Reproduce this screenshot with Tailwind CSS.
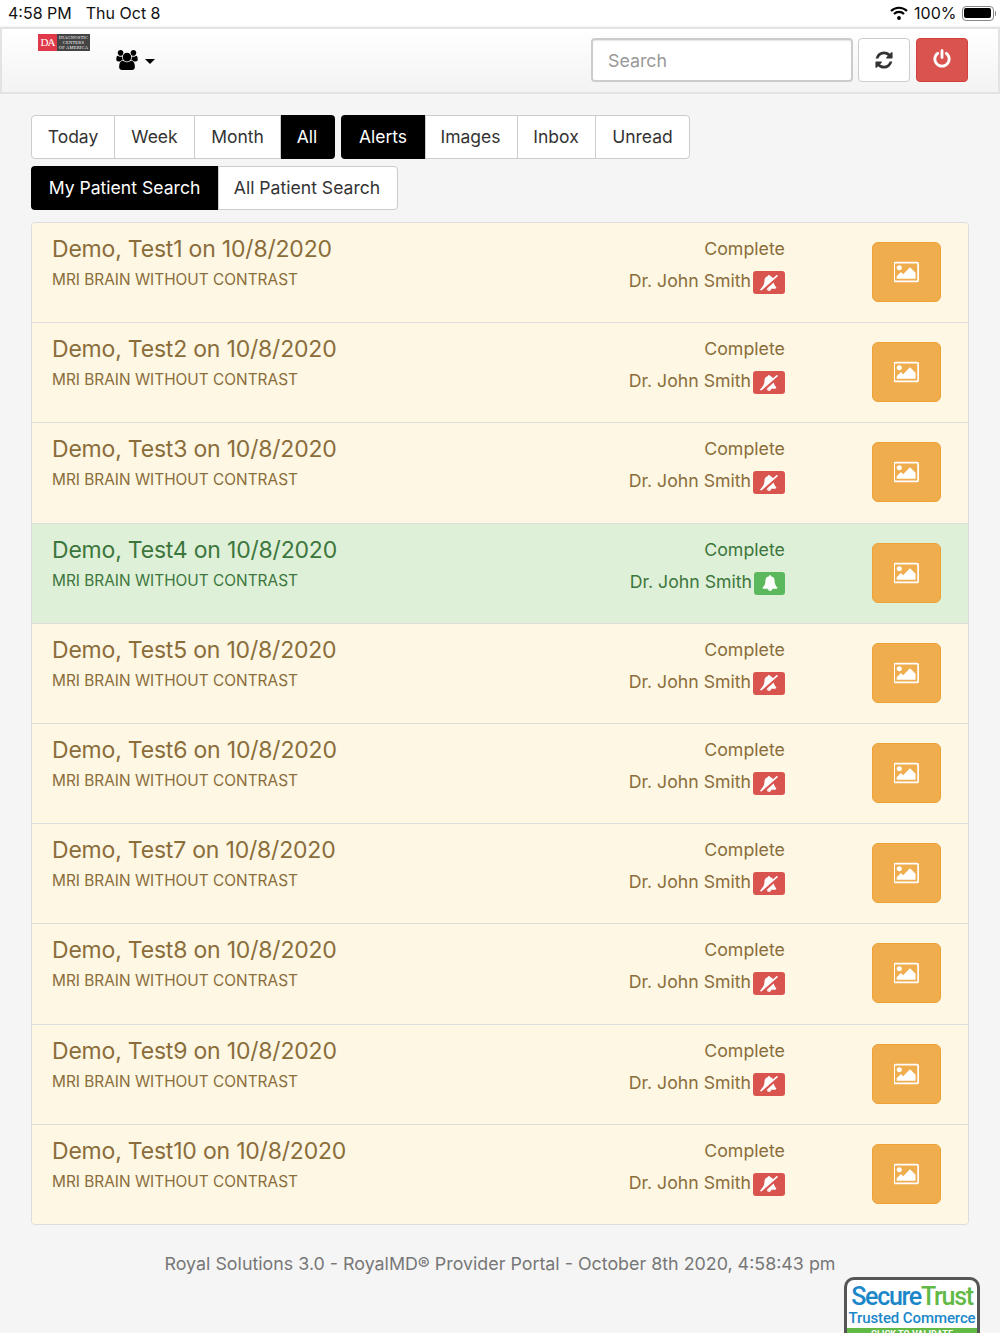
<!DOCTYPE html>
<html lang="en">
<head>
    <meta charset="UTF-8">
    <meta name="viewport" content="width=device-width, initial-scale=1.0">
    <title>RoyalMD Provider Portal</title>
    <script src="https://cdn.jsdelivr.net/npm/@tailwindcss/browser@4"></script>
</head>
<body class="h-[1333px] overflow-hidden bg-[#f5f5f5] font-['Inter',sans-serif] text-[#333]">
    <!-- Status bar -->
    <div class="flex h-[26px] items-center justify-between bg-white pl-2 pr-[4px] text-[16px] text-[#111]">
        <div class="flex gap-[14px]"><span>4:58 PM</span><span>Thu Oct 8</span></div>
        <div class="flex items-center gap-[5px]">
            <svg class="mr-px h-[14px] w-[18px]" viewBox="0 0 18 14" fill="none" stroke="#000" stroke-width="2.2"><path d="M1 5 A11.5 11.5 0 0 1 17 5"/><path d="M4 8 A7 7 0 0 1 14 8"/><circle cx="9" cy="12" r="1.9" fill="#000" stroke="none"/></svg>
            <span>100%</span>
            <div class="flex items-center gap-px">
                <div class="h-[15px] w-[32px] rounded-[4px] border border-[#888] p-[1.5px]"><div class="h-full w-full rounded-[2px] bg-black"></div></div>
                <div class="h-[5px] w-[1.5px] rounded-r-sm bg-[#888]"></div>
            </div>
        </div>
    </div>

    <!-- Navbar -->
    <div class="mt-px flex h-[67px] border-2 border-[#e3e3e3] bg-linear-to-b from-white to-[#f3f3f3]">
        <div class="ml-[36px] mt-[5px] flex h-[17px] w-[52px]">
            <div class="flex h-full w-[19px] items-center justify-center bg-[#e03a4a] font-['Liberation_Serif',serif] text-[11px] tracking-[-1px] text-white">DA</div>
            <div class="flex h-full w-[33px] flex-col items-center justify-center bg-[#444] font-['Liberation_Serif',serif] text-[4.5px] leading-[5px] tracking-[0.2px] text-white"><span>DIAGNOSTIC</span><span>CENTERS</span><span>OF AMERICA</span></div>
        </div>
        <div class="ml-[26px] mt-[20px] flex h-[22px] items-center gap-[7px]">
            <svg class="h-[20px] w-[22px]" viewBox="0 0 1920 1792" fill="#000"><path d="M593 896q-162 5-265 128h-134q-82 0-138-40.5t-56-118.5q0-353 124-353 6 0 43.5 21t97.5 42.5 119 21.5q67 0 133-23-5 37-5 66 0 139 81 256zm1071 637q0 120-73 189.5t-194 69.5h-874q-121 0-194-69.5t-73-189.5q0-53 3.5-103.5t14-109 26.5-108.5 43-97.5 62-81 85.5-53.5 111.5-20q10 0 43 21.5t73 48 107 48 135 21.5 135-21.5 107-48 73-48 43-21.5q61 0 111.5 20t85.5 53.5 62 81 43 97.5 26.5 108.5 14 109 3.5 103.5zm-1024-1277q0 106-75 181t-181 75-181-75-75-181 75-181 181-75 181 75 75 181zm704 384q0 159-112.5 271.5t-271.5 112.5-271.5-112.5-112.5-271.5 112.5-271.5 271.5-112.5 271.5 112.5 112.5 271.5zm576 225q0 78-56 118.5t-138 40.5h-134q-103-123-265-128 81-117 81-256 0-29-5-66 66 23 133 23 59 0 119-21.5t97.5-42.5 43.5-21q124 0 124 353zm-128-609q0 106-75 181t-181 75-181-75-75-181 75-181 181-75 181 75 75 181z"/></svg>
            <div class="mt-[2px] h-0 w-0 border-x-[5px] border-t-[5px] border-x-transparent border-t-black"></div>
        </div>
        <div class="ml-auto mr-[30px] mt-[9px] flex h-[44px]">
            <input class="h-[44px] w-[262px] rounded-[4px] border-2 border-[#ccc] bg-white px-[15px] text-[17.8px] shadow-[inset_0_1px_1px_rgba(0,0,0,0.1)] placeholder:text-[#999]" placeholder="Search">
            <div class="ml-[5px] flex h-[44px] w-[52px] items-center justify-center rounded-[4px] border border-[#ccc] bg-white">
                <svg class="h-[20px] w-[20px]" viewBox="0 0 1792 1792" fill="#333"><path d="M1639 1056q0 5-1 7-64 268-268 434.5t-478 166.5q-146 0-282.5-55t-243.5-157l-129 129q-19 19-45 19t-45-19-19-45v-448q0-26 19-45t45-19h448q26 0 45 19t19 45-19 45l-137 137q71 66 161 102t187 36q134 0 250-65t186-179q11-17 53-117 8-23 30-23h192q13 0 22.5 9.5t9.5 22.5zm25-800v448q0 26-19 45t-45 19h-448q-26 0-45-19t-19-45 19-45l138-138q-148-137-349-137-134 0-250 65t-186 179q-11 17-53 117-8 23-30 23h-199q-13 0-22.5-9.5t-9.5-22.5v-7q65-268 270-434.5t480-166.5q146 0 284 55.5t245 156.5l130-129q19-19 45-19t45 19 19 45z"/></svg>
            </div>
            <div class="ml-[6px] flex h-[44px] w-[52px] items-center justify-center rounded-[4px] border border-[#d43f3a] bg-[#d9534f]">
                <svg class="-mt-[2px] h-[20px] w-[20px]" viewBox="0 0 1792 1792" fill="#fff"><path d="M1664 896q0 156-61 298t-164 245-245 164-298 61-298-61-245-164-164-245-61-298q0-182 80.5-343t226.5-270q43-32 95.5-25t83.5 50q32 42 24.5 94.5t-49.5 84.5q-98 74-151.5 181t-53.5 228q0 104 40.5 198.5t109.5 163.5 163.5 109.5 198.5 40.5 198.5-40.5 163.5-109.5 109.5-163.5 40.5-198.5q0-121-53.5-228t-151.5-181q-42-32-49.5-84.5t24.5-94.5q31-43 84-50t95 25q146 109 226.5 270t80.5 343zm-640-768v640q0 52-38 90t-90 38-90-38-38-90v-640q0-52 38-90t90-38 90 38 38 90z"/></svg>
            </div>
        </div>
    </div>

    <div class="px-[31px]">
        <!-- Filter tabs -->
        <div class="mt-[21px] flex h-[44px] text-[17.5px]">
            <div class="flex w-[84px] items-center justify-center rounded-l-[4px] border border-[#ccc] bg-white">Today</div>
            <div class="-ml-px flex w-[81px] items-center justify-center border border-[#ccc] bg-white">Week</div>
            <div class="-ml-px flex w-[87px] items-center justify-center border border-[#ccc] bg-white">Month</div>
            <div class="flex w-[54px] items-center justify-center rounded-r-[4px] bg-black pr-[2px] text-white">All</div>
            <div class="ml-[6px] flex w-[84px] items-center justify-center rounded-l-[4px] bg-black text-white">Alerts</div>
            <div class="flex w-[93px] items-center justify-center border border-[#ccc] bg-white pr-[2px]">Images</div>
            <div class="-ml-px flex w-[79px] items-center justify-center border border-[#ccc] bg-white pr-px">Inbox</div>
            <div class="-ml-px flex w-[95px] items-center justify-center rounded-r-[4px] border border-[#ccc] bg-white">Unread</div>
        </div>
        <div class="mt-[7px] flex h-[44px] text-[17.6px]">
            <div class="flex w-[187px] items-center justify-center rounded-l-[4px] bg-black text-white">My Patient Search</div>
            <div class="flex w-[180px] items-center justify-center rounded-r-[4px] border border-[#ccc] bg-white pr-[2px]">All Patient Search</div>
        </div>

        <!-- Results -->
        <div id="list" class="mt-[12px] flex h-[1003px] flex-col overflow-hidden rounded-[4px] border border-[#ddd]"></div>

        <div class="mt-[26px] text-center text-[17.85px] text-[#777]">Royal Solutions 3.0 - RoyalMD® Provider Portal - October 8th 2020, 4:58:43 pm</div>
    </div>

    <!-- Trust badge -->
    <div class="absolute left-[844px] top-[1277px] h-[70px] w-[136px] overflow-hidden rounded-[10px] border-[3px] border-[#555] bg-white text-center font-['Roboto',sans-serif]">
        <div class="mt-[2px] text-[25px] font-medium leading-[29px] tracking-[-1.3px] text-[#1b87c9]">Secure<span class="text-[#62b946]">Trust</span></div>
        <div class="-mt-px whitespace-nowrap text-[15px] font-medium leading-[16px] tracking-[-0.1px] text-[#1b87c9]">Trusted Commerce</div>
        <div class="mt-[2px] h-[20px] bg-[#62b946] text-[9px] font-bold leading-[12px] text-white">CLICK TO VALIDATE</div>
    </div>

    <script>
        const rows = ['Test1', 'Test2', 'Test3', 'Test4', 'Test5', 'Test6', 'Test7', 'Test8', 'Test9', 'Test10'];
        const bellSlash = '<svg class="h-[16px] w-[18px]" viewBox="0 0 2048 1792" fill="#fff"><path d="M1558 852q61 356 298 556 0 52-38 90t-90 38h-448q0 106-75 181t-181 75-180.5-74.5-75.5-180.5zm-534 860q16 0 16-16t-16-16q-59 0-101.5-42.5t-42.5-101.5q0-16-16-16t-16 16q0 73 51.5 124.5t124.5 51.5zm1001-1628q8 10 6.5 23.5t-11.5 21.5l-1872 1622q-10 8-23.5 7t-21.5-11l-84-96q-8-10-6.5-23.5t11.5-21.5l186-161q-19-32-19-66 50-42 91-88t85-119.5 74.5-158.5 50-206 19.5-260q0-152 117-282.5t307-158.5q-8-19-8-39 0-40 28-68t68-28 68 28 28 68q0 20-8 39 124 18 219 82.5t148 157.5l418-363q10-8 23.5-7t21.5 11z"/></svg>';
        const bell = '<svg class="h-[16px] w-[16px]" viewBox="0 0 1792 1792" fill="#fff"><path d="M912 1696q0-16-16-16-59 0-101.5-42.5t-42.5-101.5q0-16-16-16t-16 16q0 73 51.5 124.5t124.5 51.5q16 0 16-16zm816-288q0 52-38 90t-90 38h-448q0 106-75 181t-181 75-181-75-75-181h-448q-52 0-90-38t-38-90q50-42 91-88t85-119.5 74.5-158.5 50-206 19.5-260q0-152 117-282.5t307-158.5q-8-19-8-39 0-40 28-68t68-28 68 28 28 68q0 20-8 39 190 28 307 158.5t117 282.5q0 139 19.5 260t50 206 74.5 158.5 85 119.5 91 88z"/></svg>';
        const picture = '<svg class="h-[24px] w-[26px]" viewBox="0 0 1920 1792" fill="#fff"><path d="M576 576q0 80-56 136t-136 56-136-56-56-136 56-136 136-56 136 56 56 136zm1024 384v448h-1408v-192l320-320 160 160 512-512zm96-704h-1600q-13 0-22.5 9.5t-9.5 22.5v1216q0 13 9.5 22.5t22.5 9.5h1600q13 0 22.5-9.5t9.5-22.5v-1216q0-13-9.5-22.5t-22.5-9.5zm160 32v1216q0 66-47 113t-113 47h-1600q-66 0-113-47t-47-113v-1216q0-66 47-113t113-47h1600q66 0 113 47t47 113z"/></svg>';

        document.getElementById('list').innerHTML = rows.map(function (name, i) {
            const ok = name === 'Test4';
            const rowClass = ok ? 'bg-[#dff0d8] text-[#3c763d]' : 'bg-[#fdf7e3] text-[#8a6d3b]';
            const badgeClass = ok ? 'w-[31px] bg-[#5cb85c]' : 'w-[32px] bg-[#d9534f]';
            const border = i < rows.length - 1 ? 'border-b border-[#ddd]' : '';
            return `<div class="relative flex flex-1 ${rowClass} ${border}">
                <div class="pl-[20px] pt-[11px]">
                    <div class="text-[23px] leading-[30px] tracking-[-0.2px]">Demo, ${name} on 10/8/2020</div>
                    <div class="mt-[6px] text-[15.4px] leading-[20px]">MRI BRAIN WITHOUT CONTRAST</div>
                </div>
                <div class="ml-auto flex w-[200px] flex-col items-end pt-[13px]">
                    <div class="text-[17.8px] leading-[25px]">Complete</div>
                    <div class="mt-[7px] flex items-center text-[17.7px] leading-[24px]">Dr. John Smith<span class="ml-[2px] mt-[3px] flex h-[23px] items-center justify-center rounded-[3px] ${badgeClass}">${ok ? bell : bellSlash}</span></div>
                </div>
                <div class="ml-[87px] mr-[27px] mt-[19px] flex h-[60px] w-[69px] items-center justify-center rounded-[6px] border border-[#eea236] bg-[#f0ad4e]">${picture}</div>
            </div>`;
        }).join('');
    </script>
</body>
</html>
